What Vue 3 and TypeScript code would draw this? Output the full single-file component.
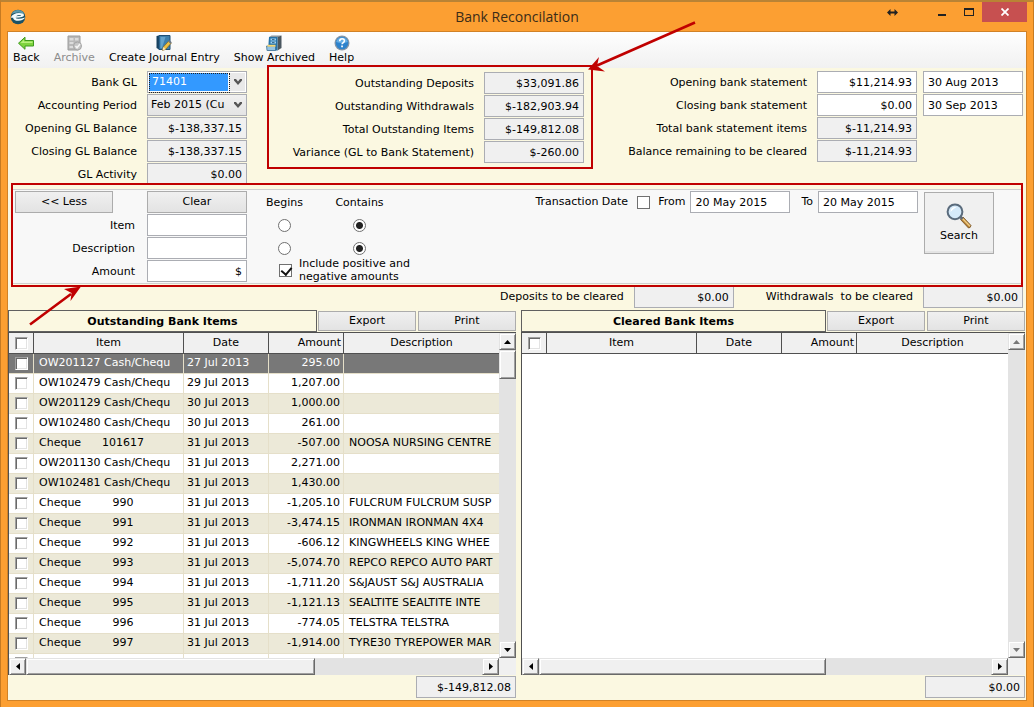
<script setup lang="ts">
import { ref } from 'vue'

interface BankItem {
  item: string
  date: string
  amount: string
  description: string
}

interface Field {
  id: string
  label: string
  value: string
  readonly: boolean
  date?: string
}

const cheque = (no: string) => 'Cheque' + ' '.repeat(no.length > 3 ? 6 : 9) + no

const outstanding = ref<BankItem[]>([
  { item: 'OW201127 Cash/Chequ', date: '27 Jul 2013', amount: '295.00', description: '' },
  { item: 'OW102479 Cash/Chequ', date: '29 Jul 2013', amount: '1,207.00', description: '' },
  { item: 'OW201129 Cash/Chequ', date: '30 Jul 2013', amount: '1,000.00', description: '' },
  { item: 'OW102480 Cash/Chequ', date: '30 Jul 2013', amount: '261.00', description: '' },
  { item: cheque('101617'), date: '31 Jul 2013', amount: '-507.00', description: 'NOOSA NURSING CENTRE' },
  { item: 'OW201130 Cash/Chequ', date: '31 Jul 2013', amount: '2,271.00', description: '' },
  { item: 'OW102481 Cash/Chequ', date: '31 Jul 2013', amount: '1,430.00', description: '' },
  { item: cheque('990'), date: '31 Jul 2013', amount: '-1,205.10', description: 'FULCRUM FULCRUM SUSP' },
  { item: cheque('991'), date: '31 Jul 2013', amount: '-3,474.15', description: 'IRONMAN IRONMAN 4X4' },
  { item: cheque('992'), date: '31 Jul 2013', amount: '-606.12', description: 'KINGWHEELS KING WHEE' },
  { item: cheque('993'), date: '31 Jul 2013', amount: '-5,074.70', description: 'REPCO REPCO AUTO PART' },
  { item: cheque('994'), date: '31 Jul 2013', amount: '-1,711.20', description: 'S&JAUST S&J AUSTRALIA' },
  { item: cheque('995'), date: '31 Jul 2013', amount: '-1,121.13', description: 'SEALTITE SEALTITE INTE' },
  { item: cheque('996'), date: '31 Jul 2013', amount: '-774.05', description: 'TELSTRA TELSTRA' },
  { item: cheque('997'), date: '31 Jul 2013', amount: '-1,914.00', description: 'TYRE30 TYREPOWER MAR' },
  { item: '', date: '', amount: '', description: '' },
])

const panels = [
  { key: 'out', title: 'Outstanding Bank Items', rows: outstanding.value, total: '$-149,812.08' },
  { key: 'clr', title: 'Cleared Bank Items', rows: [] as BankItem[], total: '$0.00' },
]

const ledger: Field[] = [
  { id: 'opening-gl', label: 'Opening GL Balance', value: '$-138,337.15', readonly: true },
  { id: 'closing-gl', label: 'Closing GL Balance', value: '$-138,337.15', readonly: true },
  { id: 'gl-activity', label: 'GL Activity', value: '$0.00', readonly: true },
]

const totals: Field[] = [
  { id: 'out-deposits', label: 'Outstanding Deposits', value: '$33,091.86', readonly: true },
  { id: 'out-withdrawals', label: 'Outstanding Withdrawals', value: '$-182,903.94', readonly: true },
  { id: 'out-total', label: 'Total Outstanding Items', value: '$-149,812.08', readonly: true },
  { id: 'variance', label: 'Variance (GL to Bank Statement)', value: '$-260.00', readonly: true },
]

const statement: Field[] = [
  { id: 'open-stmt', label: 'Opening bank statement', value: '$11,214.93', readonly: false, date: '30 Aug 2013' },
  { id: 'close-stmt', label: 'Closing bank statement', value: '$0.00', readonly: false, date: '30 Sep 2013' },
  { id: 'stmt-items', label: 'Total bank statement items', value: '$-11,214.93', readonly: true },
  { id: 'stmt-balance', label: 'Balance remaining to be cleared', value: '$-11,214.93', readonly: true },
]

const itemMatch = ref('contains')
const descMatch = ref('contains')
const bothSigns = ref(true)
const useDate = ref(false)
</script>

<template>
  <div class="window">
    <header class="titlebar">
      <svg class="app-icon" viewBox="0 0 16 16" aria-hidden="true">
        <circle cx="8" cy="8" r="7.300" fill="#1b5266" />
        <path d="M1.500 5a7.300 7.300 0 0 1 13 0q-6.500-3-13 0z" fill="#5b9aac" />
        <path d="M.7 8.500Q3 4 9 4q5 0 5 2.300 0 2.200-8.500 2.500Q7 11 15.300 8.500q-3.300 4-8.800 3.200Q3 11 3.200 8.800 2 8.800.7 8.500z" fill="#f2fbfd" />
        <path d="M6 7.200q2-1.600 5-1.200 1 .8-5 1.200z" fill="#1b5266" />
      </svg>
      <h1>Bank Reconcilation</h1>
      <div class="winctl">
        <button class="ctl move" aria-label="Resize">
          <svg width="11" height="7" viewBox="0 0 11 7"><path d="M0 3.500 3.500 0v2.500h4V0L11 3.500 7.500 7V4.500h-4V7z" fill="#222" /></svg>
        </button>
        <button class="ctl" aria-label="Minimise">
          <svg width="8" height="10" viewBox="0 0 8 10"><path d="M0 7h8v2H0z" fill="#222" /></svg>
        </button>
        <button class="ctl" aria-label="Maximise">
          <svg width="10" height="8" viewBox="0 0 10 8"><path d="M0 0h10v8H0zM1 2v5h8V2z" fill="#222" fill-rule="evenodd" /></svg>
        </button>
        <button class="ctl close" aria-label="Close">
          <svg width="8" height="8" viewBox="0 0 8 8"><path d="M.5.500l7 7M7.500.500l-7 7" stroke="#fff" stroke-width="1.800" /></svg>
        </button>
      </div>
    </header>

    <main class="content">
      <nav class="toolbar">
        <button>
          <svg viewBox="0 0 16 16"><path d="M.5 8.200 7 2.200v3.300h8.500v5.500H7v3.300z" fill="#7ed43e" stroke="#3f9a1e" /><path d="M2.500 8 6 4.700v1.800h8.500V8z" fill="#b9f07f" /></svg>
          <span>Back</span>
        </button>
        <button disabled>
          <svg viewBox="0 0 16 16">
            <path d="M2 1h12v12l-1.500 2H2z" fill="#b9b9b9" stroke="#9c9c9c" />
            <path d="M3.500 3h4v2.500h-4zM9 3h3.500v2.500H9zM3.500 7h4v2h-4zM3.500 11h4v2h-4z" fill="#dcdcdc" />
            <circle cx="11.500" cy="11" r="4" fill="#c6c6c6" stroke="#a6a6a6" />
            <path d="M9.500 11l1.500 1.800 3-3.800" fill="none" stroke="#f5f5f5" stroke-width="1.500" />
          </svg>
          <span>Archive</span>
        </button>
        <button>
          <svg viewBox="0 0 16 16">
            <path d="M.5 1 3 .5v14L.5 13z" fill="#17415f" />
            <path d="M3 .5h11v14H3z" fill="#3c7fac" stroke="#1f4f74" />
            <path d="M4.500 2h5L6 13H4.500z" fill="#64a3cb" />
            <path d="M6.500 15.500l.8-3.500 5.500-6 2.500 2-5.600 6.300z" fill="#edc143" stroke="#86651f" stroke-width=".7" />
            <path d="M6.500 15.500l.8-3.500 2.400 2.200z" fill="#f6e3bd" />
            <path d="M12.200 6.700 13.300 5.300l2.500 2-1.200 1.400z" fill="#6f7883" />
          </svg>
          <span>Create Journal Entry</span>
        </button>
        <button>
          <svg viewBox="0 0 16 16">
            <path d="M3 2 5.500.5h10L12 2z" fill="#8997a2" />
            <path d="M11.500 2 15.500.5v12.500l-4 2.500z" fill="#4a5760" />
            <path d="M3 2h8.500v13.500H2z" fill="#2673a8" />
            <path d="M4.500 3.500h5.500v2H4.500zM4.500 6.500h5.500v2H4.500z" fill="#a5d4f2" />
            <path d="M6 4.200h2.500v.8H6zM6 7.200h2.500V8H6z" fill="#174c72" />
            <path d="M.5 11h9v4.500h-8.500z" fill="#94c4e4" stroke="#35688c" stroke-width=".7" />
            <path d="M1.500 9.800h8v1.900h-8z" fill="#f4d675" />
          </svg>
          <span>Show Archived</span>
        </button>
        <button>
          <svg viewBox="0 0 16 16">
            <circle cx="8" cy="8" r="7.500" fill="#8896a5" />
            <circle cx="8" cy="8" r="6.300" fill="#2e83cd" />
            <path d="M2.200 7a6 6 0 0 1 11.600 0q-6 2-11.600 0z" fill="#65ade4" />
            <path d="M5.700 6.200q.1-2.400 2.400-2.400t2.300 2q0 1.200-1.300 1.900-1 .5-1 1.600" fill="none" stroke="#fff" stroke-width="1.600" />
            <path d="M7.200 10.500h1.700v1.700H7.200z" fill="#fff" />
          </svg>
          <span>Help</span>
        </button>
      </nav>

      <section class="summary">
        <div class="fields ledger">
          <label for="bank-gl">Bank GL</label>
          <span class="select focus">
            <select id="bank-gl"><option>71401</option></select>
            <svg viewBox="0 0 8 6"><path d="M0 0h2l2 2.500L6 0h2v1.500L4 6 0 1.500z" fill="#555" /></svg>
          </span>
          <label for="period">Accounting Period</label>
          <span class="select">
            <select id="period"><option>Feb 2015 (Cu</option></select>
            <svg viewBox="0 0 8 6"><path d="M0 0h2l2 2.500L6 0h2v1.500L4 6 0 1.500z" fill="#555" /></svg>
          </span>
          <template v-for="f in ledger" :key="f.id">
            <label :for="f.id">{{ f.label }}</label>
            <input :id="f.id" class="box num" :value="f.value" readonly />
          </template>
        </div>

        <div class="fields totals">
          <template v-for="f in totals" :key="f.id">
            <label :for="f.id">{{ f.label }}</label>
            <input :id="f.id" class="box num" :value="f.value" readonly />
          </template>
        </div>

        <div class="fields statement">
          <template v-for="f in statement" :key="f.id">
            <label :for="f.id">{{ f.label }}</label>
            <input :id="f.id" class="box num" :value="f.value" :readonly="f.readonly" />
            <input v-if="f.date" class="box" :value="f.date" :aria-label="f.label + ' date'" />
            <span v-else></span>
          </template>
        </div>
      </section>

      <section class="filter">
        <form class="filter-body" @submit.prevent>
          <div class="criteria">
            <button type="button" class="btn less">&lt;&lt; Less</button>
            <button type="reset" class="btn">Clear</button>
            <label for="f-item">Item</label>
            <input id="f-item" class="box" />
            <label for="f-desc">Description</label>
            <input id="f-desc" class="box" />
            <label for="f-amount">Amount</label>
            <input id="f-amount" class="box num" value="$" />
          </div>
          <div class="match">
            <span class="mode">Begins</span>
            <span class="mode">Contains</span>
            <input v-model="itemMatch" type="radio" name="im" value="begins" aria-label="Item begins" />
            <input v-model="itemMatch" type="radio" name="im" value="contains" aria-label="Item contains" />
            <input v-model="descMatch" type="radio" name="dm" value="begins" aria-label="Description begins" />
            <input v-model="descMatch" type="radio" name="dm" value="contains" aria-label="Description contains" />
            <label class="signs">
              <input v-model="bothSigns" type="checkbox" class="flat" />
              <span>Include positive and<br />negative amounts</span>
            </label>
          </div>
          <div class="dates">
            <label for="use-date">Transaction Date</label>
            <input id="use-date" v-model="useDate" type="checkbox" class="flat" />
            <label for="from">From</label>
            <input id="from" class="box" value="20 May 2015" />
            <label for="to" class="to">To</label>
            <input id="to" class="box" value="20 May 2015" />
          </div>
          <button type="submit" class="btn search">
            <svg viewBox="0 0 26 26">
              <path d="M14.500 16.500l2.500-2.500 8 8.500q-.5 2.500-2.500 2.500z" fill="#b98335" stroke="#6d4a1e" stroke-width=".8" />
              <path d="M16.500 15.500l7.500 7.800" stroke="#f0cf8a" stroke-width="1.300" />
              <path d="M13 14.500l2-2 2.500 2.500-2 2z" fill="#666c72" />
              <circle cx="9" cy="8.800" r="7.400" fill="#d5eafa" stroke="#5a6b7c" stroke-width="2" />
              <path d="M4.500 9a4.500 5 0 0 1 6-4.800Q6 6 4.500 9z" fill="#fff" />
            </svg>
            <span>Search</span>
          </button>
        </form>
      </section>

      <section class="clearing">
        <label for="dep-clear">Deposits to be cleared</label>
        <input id="dep-clear" class="box num" value="$0.00" readonly />
        <label for="wd-clear" class="wd">Withdrawals&nbsp; to be cleared</label>
        <input id="wd-clear" class="box num" value="$0.00" readonly />
      </section>

      <div class="panels">
        <section v-for="p in panels" :key="p.key" class="panel" :class="p.key">
          <div class="panel-head">
            <h2>{{ p.title }}</h2>
            <button class="btn">Export</button>
            <button class="btn">Print</button>
          </div>
          <div class="grid">
            <div class="view">
              <table>
                <colgroup>
                  <col class="c-check" /><col class="c-item" /><col class="c-date" /><col class="c-amount" /><col />
                </colgroup>
                <thead>
                  <tr>
                    <th><input type="checkbox" class="sunk" :aria-label="'Select all ' + p.title" /></th>
                    <th>Item</th>
                    <th>Date</th>
                    <th class="amount">Amount</th>
                    <th>Description</th>
                  </tr>
                </thead>
                <tbody>
                  <tr v-for="(r, i) in p.rows" :key="i" :class="{ selected: i === 0 }">
                    <td class="check"><input type="checkbox" class="sunk" :aria-label="'Select ' + r.item" /></td>
                    <td class="item">{{ r.item }}</td>
                    <td>{{ r.date }}</td>
                    <td class="amount">{{ r.amount }}</td>
                    <td class="desc">{{ r.description }}</td>
                  </tr>
                </tbody>
              </table>
            </div>
            <div class="vscroll">
              <button class="sb" aria-label="Scroll up"><svg viewBox="0 0 7 4"><path d="M0 4 3.500 0 7 4z" /></svg></button>
              <div v-if="p.rows.length" class="thumb"></div>
              <button class="sb end" aria-label="Scroll down"><svg viewBox="0 0 7 4"><path d="M0 0 3.500 4 7 0z" /></svg></button>
            </div>
            <div class="hscroll">
              <button class="sb" aria-label="Scroll left"><svg class="side" viewBox="0 0 4 7"><path d="M4 0 0 3.500 4 7z" /></svg></button>
              <div class="thumb"></div>
              <button class="sb end" aria-label="Scroll right"><svg class="side" viewBox="0 0 4 7"><path d="M0 0 4 3.500 0 7z" /></svg></button>
            </div>
            <div class="corner"></div>
          </div>
          <input class="box num total" :value="p.total" readonly :aria-label="p.title + ' total'" />
        </section>
      </div>
    </main>

    <svg class="arrows" width="720" height="340" viewBox="0 0 720 340" aria-hidden="true">
      <g stroke="#c00000" stroke-width="2.600" fill="#c00000">
        <path d="M695 22.500 597 65.500M30 324.500 71 294" />
        <path stroke="none" d="M588 69.500l11-12.500-2 9 8 5.500zM81 286.500l-17 2.500 7.500 4-1 8z" />
      </g>
    </svg>
  </div>
</template>

<style>
body {
  margin: 0;
}
</style>

<style scoped>
* {
  box-sizing: border-box;
}
.window {
  position: relative;
  display: flex;
  flex-direction: column;
  height: 100vh;
  padding: 0 6px 6px;
  background: #fc9f32;
  border: 1px solid #c67a22;
  border-top: 2px solid #b98335;
  border-bottom: 0;
  font: 11px/14px "DejaVu Sans", Verdana, sans-serif;
  color: #000;
}
button,
input,
select {
  margin: 0;
  font: inherit;
  color: inherit;
}
.titlebar {
  display: flex;
  flex: none;
  align-items: center;
  height: 29px;
}
.app-icon {
  width: 16px;
  height: 16px;
  margin-left: 3px;
}
h1 {
  flex: 1;
  margin: 0 0 0 129px;
  font: 400 14px/20px "Open Sans", sans-serif;
  color: #3b2c18;
  text-align: center;
}
.winctl {
  display: flex;
  align-self: flex-start;
}
.ctl {
  display: flex;
  align-items: center;
  justify-content: center;
  width: 27px;
  height: 20px;
  padding: 0;
  background: none;
  border: 0;
}
.ctl.move {
  margin-right: 22px;
}
.ctl.close {
  width: 45px;
  background: #c75050;
}
.content {
  display: flex;
  flex: 1;
  flex-direction: column;
  min-height: 0;
  background: #fbf8e1;
  border: 1px solid #d18227;
}
.toolbar {
  display: flex;
  flex: none;
  gap: 14px;
  height: 36px;
  padding: 3px 5px 0;
  background: linear-gradient(#fefefe, #f1f1f1);
}
.toolbar button {
  display: flex;
  flex-direction: column;
  align-items: center;
  padding: 0;
  background: none;
  border: 0;
  white-space: nowrap;
}
.toolbar button:disabled {
  color: #8c8c8c;
}
.toolbar svg {
  width: 16px;
  height: 16px;
}
.summary {
  display: flex;
  flex: none;
  align-items: flex-start;
  margin-bottom: -2px;
  padding: 3px 3px 0 0;
}
.fields {
  display: grid;
  grid-auto-rows: 22px;
  gap: 1px 10px;
  align-items: center;
  text-align: right;
  white-space: nowrap;
}
.fields label,
.criteria label {
  padding-top: 2px;
}
.ledger {
  grid-template-columns: 129px 100px;
}
.totals {
  grid-template-columns: 205px 100px;
  margin: -6px 0 0 20px;
  padding: 5px 7px 4px 0;
  border: 2px solid #c00000;
}
.statement {
  grid-template-columns: auto 100px 100px;
  margin-left: auto;
  column-gap: 6px;
}
.statement label {
  margin-right: 4px;
}
.box {
  width: 100px;
  height: 22px;
  padding: 0 4px;
  background: #fff;
  border: 1px solid #abadb3;
  border-radius: 0;
  outline: 0;
}
.box:read-only {
  background: #f0f0f0;
}
.num {
  text-align: right;
}
.select {
  position: relative;
  height: 22px;
}
.select select {
  display: block;
  width: 100px;
  height: 22px;
  padding: 0 18px 0 3px;
  appearance: none;
  background: linear-gradient(#f0f0f0, #e4e4e4);
  border: 1px solid #abadb3;
  border-radius: 0;
}
.select svg {
  position: absolute;
  top: 8px;
  right: 5px;
  width: 8px;
  height: 6px;
}
.select.focus::after {
  content: "";
  position: absolute;
  top: 2px;
  left: 2px;
  width: 79px;
  height: 18px;
  border: 1px dotted #222;
  pointer-events: none;
}
.select.focus select {
  padding-left: 4px;
  background: linear-gradient(#3399ff, #3399ff) 1px 1px / 79px 18px no-repeat, linear-gradient(#e9e9e9, #e9e9e9) 81px 1px / 16px 18px no-repeat, #fff;
  color: #fff;
}
.filter {
  position: relative;
  flex: none;
  margin: 0 3px;
  padding: 4px 0 1px;
  background: #fbf8e1;
  border: 2px solid #c00000;
}
.filter-body {
  display: flex;
  align-items: flex-start;
  padding: 1px 27px 1px 2px;
  background: #f8f8f8;
  border: solid #d0d0d0;
  border-width: 1px 0;
}
.criteria {
  display: grid;
  grid-template-columns: 120px 100px;
  grid-auto-rows: 22px;
  gap: 1px 12px;
  align-items: center;
  text-align: right;
}
.btn {
  height: 22px;
  padding: 0;
  background: linear-gradient(#f0f0f0, #e3e3e3);
  border: 1px solid #acacac;
  border-radius: 0;
  text-align: center;
}
.less {
  width: 98px;
}
.match {
  display: grid;
  grid-template-columns: 75px 75px;
  grid-template-rows: 22px 22px 22px 20px;
  row-gap: 1px;
  align-items: center;
  justify-items: center;
}
.mode {
  padding-top: 2px;
}
.match input[type="radio"] {
  width: 13px;
  height: 13px;
  appearance: none;
  background: #fff;
  border: 1px solid #707070;
  border-radius: 50%;
}
.match input[type="radio"]:checked {
  background: radial-gradient(circle, #222 0 3px, #fff 4px);
}
.signs {
  display: flex;
  grid-column: 1 / 3;
  gap: 7px;
  align-items: center;
  justify-self: start;
  margin-left: 32px;
  line-height: 13px;
  white-space: nowrap;
}
.flat {
  flex: none;
  width: 13px;
  height: 13px;
  appearance: none;
  background: #fff;
  border: 1px solid #707070;
}
.flat:checked::before {
  content: "";
  display: block;
  width: 5px;
  height: 8px;
  margin-left: 3px;
  border: solid #111;
  border-width: 0 2px 2px 0;
  transform: rotate(40deg);
}
.dates {
  display: flex;
  align-items: center;
  margin-left: auto;
  white-space: nowrap;
}
.dates .flat {
  margin: 0 8px 0 9px;
}
.dates .box {
  margin-left: 5px;
}
.to {
  margin-left: 11px;
}
.search {
  display: flex;
  flex-direction: column;
  align-items: center;
  width: 70px;
  height: 62px;
  margin: 1px 0 0 6px;
  padding-top: 10px;
  background: #f0f0f0;
  box-shadow: inset 0 -2px #e4e4e4;
}
.search svg {
  width: 26px;
  height: 26px;
}
.clearing {
  display: flex;
  flex: none;
  align-items: center;
  justify-content: flex-end;
  gap: 10px;
  margin-top: -1px;
  padding-right: 3px;
  white-space: nowrap;
}
.wd {
  margin-left: 22px;
}
.panels {
  display: flex;
  flex: 1;
  gap: 5px;
  min-height: 0;
  padding: 2px 1px 2px 0;
}
.panel {
  display: flex;
  flex: 1 1 508px;
  flex-direction: column;
  min-width: 0;
}
.panel.clr {
  flex: 1 1 504px;
}
.panel-head {
  display: grid;
  flex: none;
  grid-template-columns: 1fr 98px 98px;
  column-gap: 2px;
  align-items: center;
  height: 22px;
}
.panel-head .btn {
  height: 20px;
}
h2 {
  height: 22px;
  margin: 0 -1px 0 0;
  border: 1px solid #606060;
  font: 700 11px/22px "DejaVu Sans", Verdana, sans-serif;
  text-align: center;
}
.grid {
  display: grid;
  flex: 1;
  grid-template-rows: minmax(0, 1fr) 17px;
  grid-template-columns: minmax(0, 1fr) 17px;
  min-height: 0;
  background: #fff;
  border: solid #505050;
  border-width: 1px 0 0 1px;
}
.view {
  overflow: hidden;
}
table {
  width: 100%;
  table-layout: fixed;
  border-spacing: 0;
}
.c-check {
  width: 25px;
}
.c-item {
  width: 150px;
}
.c-date {
  width: 85px;
}
.c-amount {
  width: 75px;
}
th {
  height: 21px;
  padding: 0;
  background: #f0f0f0;
  border: solid #505050;
  border-width: 0 1px 1px 0;
  font-weight: 400;
  text-align: center;
}
th:last-child {
  border-right: 0;
}
th.amount {
  padding-right: 2px;
  text-align: right;
}
td {
  height: 20px;
  padding: 0 0 2px 3px;
  overflow: hidden;
  border: solid #e5dfc9;
  border-width: 0 1px 1px 0;
  white-space: pre;
}
td:last-child {
  border-right: 0;
}
td.item,
td.desc {
  padding-left: 5px;
}
td.amount {
  padding-right: 3px;
  text-align: right;
}
td.check,
th:first-child {
  padding: 0;
  text-align: center;
}
tbody tr:nth-child(odd) td {
  background: #ece9d8;
}
tbody tr.selected td {
  background: #787878;
  color: #fff;
}
.sunk {
  display: block;
  width: 13px;
  height: 13px;
  margin: 0 auto;
  appearance: none;
  background: #fff;
  border: 1px solid;
  border-color: #a0a0a0 #fff #fff #a0a0a0;
  box-shadow: inset 1px 1px #696969, inset -1px -1px #e3e3e3;
}
.vscroll,
.hscroll {
  display: flex;
  background: #e3e3e3;
}
.vscroll {
  flex-direction: column;
}
.sb,
.thumb {
  flex: none;
  background: #f0f0f0;
  border: 1px solid;
  border-color: #e3e3e3 #696969 #696969 #e3e3e3;
  box-shadow: inset 1px 1px #fff, inset -1px -1px #a0a0a0;
}
.sb {
  display: flex;
  align-items: center;
  justify-content: center;
  width: 17px;
  height: 17px;
  padding: 0;
}
.sb svg {
  width: 7px;
  height: 4px;
}
.sb .side {
  width: 4px;
  height: 7px;
}
.sb.end {
  margin: auto 0 0;
}
.hscroll .sb.end {
  margin: 0 0 0 auto;
}
.clr .vscroll path {
  fill: #777;
}
.vscroll .thumb {
  height: 29px;
}
.hscroll .thumb {
  width: 59%;
}
.corner {
  background: #f0f0f0;
}
.total {
  flex: none;
  align-self: flex-end;
  margin-top: 1px;
}
.arrows {
  position: absolute;
  top: -2px;
  left: -1px;
  pointer-events: none;
}
</style>
